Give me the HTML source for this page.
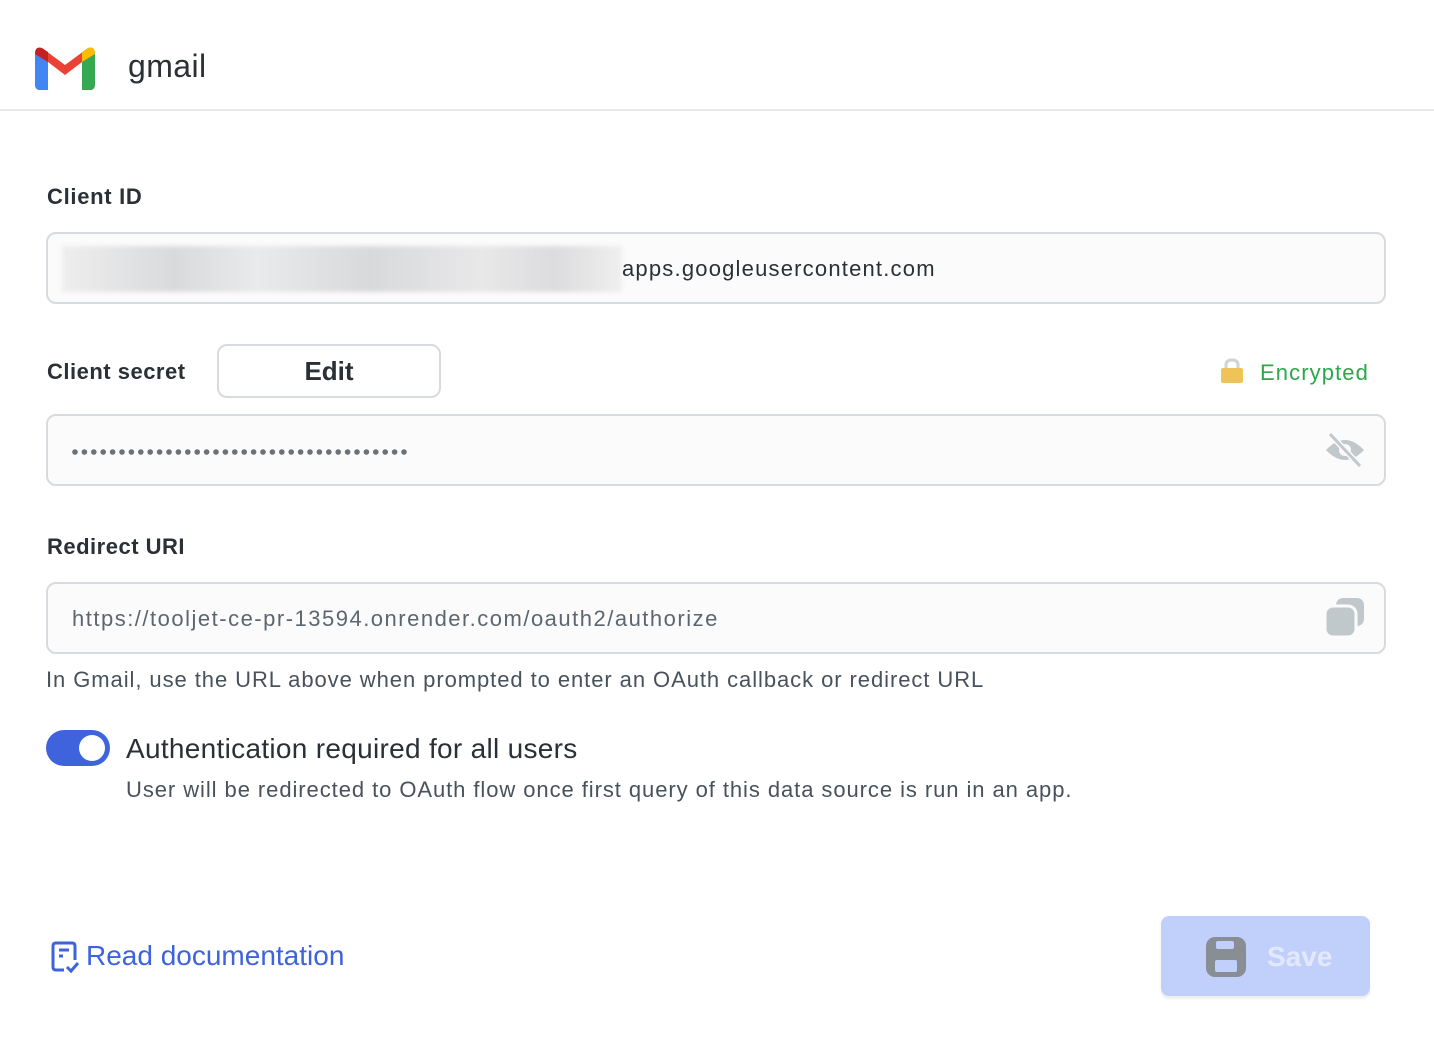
<!DOCTYPE html>
<html><head><meta charset="utf-8"><style>
*{box-sizing:border-box;margin:0;padding:0}
body{width:1434px;height:1044px;background:#fff;font-family:"Liberation Sans",sans-serif;color:#2b3036;position:relative;overflow:hidden}
.abs{position:absolute}
.hdr{left:0;top:0;width:1434px;height:111px;border-bottom:2px solid #e6e8eb}
.label{font-size:22px;font-weight:bold;color:#2b3036}
.inp{left:46px;width:1340px;height:72px;border:2px solid #d7dbdf;border-radius:10px;background:#fbfbfb}
.t{font-size:22px;white-space:nowrap}
</style></head><body>
<div class="abs hdr"></div>
<svg class="abs" style="left:35px;top:46px" width="60" height="44" viewBox="0 0 60 44">
<path d="M0 8 Q0 0 7 2 L30 19 L53 2 Q60 0 60 8 V38 Q60 44 55 44 H47 V16 L30 29 L13 16 V44 H5 Q0 44 0 38Z" fill="#ea4335"/>
<path d="M0 8 V38 Q0 44 5 44 H13 V16 L0 8Z" fill="#4285f4"/>
<path d="M60 8 V38 Q60 44 55 44 H47 V16 Z" fill="#34a853"/>
<path d="M47 16 L60 8 Q60 0 53 2 L47 6Z" fill="#fbbc04"/>
<path d="M13 16 L0 8 Q0 0 7 2 L13 6Z" fill="#c5221f"/>
</svg>
<div class="abs" style="left:128px;top:48px;font-size:32px;color:#2b3036;letter-spacing:0.4px">gmail</div>

<div class="abs label" style="left:47px;top:184px;letter-spacing:0.7px">Client ID</div>
<div class="abs inp" style="top:232px"></div>
<div class="abs" style="left:62px;top:246px;width:560px;height:46px;background:linear-gradient(90deg,#eee,#d9dadc 20%,#e9eaeb 35%,#d8d9db 55%,#e8e8e9 75%,#dcdcde 88%,#efefef);filter:blur(2px)"></div>
<div class="abs t" style="left:622px;top:256px;color:#2b3036;letter-spacing:1.2px">apps.googleusercontent.com</div>

<div class="abs label" style="left:47px;top:359px;letter-spacing:0.5px">Client secret</div>
<div class="abs" style="left:217px;top:344px;width:224px;height:54px;border:2px solid #d7dbdf;border-radius:10px;text-align:center;line-height:50px;font-size:26px;font-weight:bold;color:#2b3036">Edit</div>
<svg class="abs" style="left:1220px;top:358px" width="24" height="26" viewBox="0 0 24 26"><path d="M6 11 V7 Q6 2 12 2 Q18 2 18 7 V11" fill="none" stroke="#cfd3d6" stroke-width="3"/><rect x="1" y="10" width="22" height="15" rx="2" fill="#eec35a"/></svg>
<div class="abs t" style="left:1260px;top:360px;color:#2aa84a;letter-spacing:1.1px">Encrypted</div>
<div class="abs inp" style="top:414px"></div>
<svg class="abs" style="left:70px;top:446px" width="340" height="12">
<g fill="#6a7178">
<circle cx="5" cy="6" r="2.8"/><circle cx="14.4" cy="6" r="2.8"/><circle cx="23.8" cy="6" r="2.8"/><circle cx="33.2" cy="6" r="2.8"/><circle cx="42.6" cy="6" r="2.8"/><circle cx="52" cy="6" r="2.8"/><circle cx="61.4" cy="6" r="2.8"/><circle cx="70.8" cy="6" r="2.8"/><circle cx="80.2" cy="6" r="2.8"/><circle cx="89.6" cy="6" r="2.8"/><circle cx="99" cy="6" r="2.8"/><circle cx="108.4" cy="6" r="2.8"/><circle cx="117.8" cy="6" r="2.8"/><circle cx="127.2" cy="6" r="2.8"/><circle cx="136.6" cy="6" r="2.8"/><circle cx="146" cy="6" r="2.8"/><circle cx="155.4" cy="6" r="2.8"/><circle cx="164.8" cy="6" r="2.8"/><circle cx="174.2" cy="6" r="2.8"/><circle cx="183.6" cy="6" r="2.8"/><circle cx="193" cy="6" r="2.8"/><circle cx="202.4" cy="6" r="2.8"/><circle cx="211.8" cy="6" r="2.8"/><circle cx="221.2" cy="6" r="2.8"/><circle cx="230.6" cy="6" r="2.8"/><circle cx="240" cy="6" r="2.8"/><circle cx="249.4" cy="6" r="2.8"/><circle cx="258.8" cy="6" r="2.8"/><circle cx="268.2" cy="6" r="2.8"/><circle cx="277.6" cy="6" r="2.8"/><circle cx="287" cy="6" r="2.8"/><circle cx="296.4" cy="6" r="2.8"/><circle cx="305.8" cy="6" r="2.8"/><circle cx="315.2" cy="6" r="2.8"/><circle cx="324.6" cy="6" r="2.8"/><circle cx="334" cy="6" r="2.8"/>
</g></svg>
<svg class="abs" style="left:1324px;top:430px" width="42" height="40" viewBox="0 0 42 40"><path d="M2 20 Q21 0 40 20 Q21 40 2 20Z" fill="#c1c8cc"/><circle cx="21" cy="20" r="6" fill="#fbfbfb"/><line x1="6" y1="4" x2="36" y2="36" stroke="#fbfbfb" stroke-width="6"/><line x1="6" y1="4" x2="36" y2="36" stroke="#c1c8cc" stroke-width="3"/></svg>

<div class="abs label" style="left:47px;top:534px;letter-spacing:0.5px">Redirect URI</div>
<div class="abs inp" style="top:582px"></div>
<div class="abs t" style="left:72px;top:606px;color:#5d666e;letter-spacing:1.5px">https://tooljet-ce-pr-13594.onrender.com/oauth2/authorize</div>
<svg class="abs" style="left:1324px;top:596px" width="42" height="42" viewBox="0 0 42 42"><rect x="12" y="2" width="28" height="28" rx="7" fill="#c1c8cc"/><rect x="1" y="10" width="31" height="31" rx="8" fill="#c1c8cc" stroke="#fbfbfb" stroke-width="3"/></svg>
<div class="abs t" style="left:46px;top:667px;color:#48525c;letter-spacing:0.93px">In Gmail, use the URL above when prompted to enter an OAuth callback or redirect URL</div>

<div class="abs" style="left:46px;top:730px;width:64px;height:36px;border-radius:18px;background:#3e63dd"></div>
<div class="abs" style="left:79px;top:735px;width:26px;height:26px;border-radius:13px;background:#fff"></div>
<div class="abs" style="left:126px;top:733px;font-size:28px;color:#2b3036;white-space:nowrap;letter-spacing:0.3px">Authentication required for all users</div>
<div class="abs t" style="left:126px;top:777px;color:#48525c;letter-spacing:0.93px">User will be redirected to OAuth flow once first query of this data source is run in an app.</div>

<svg class="abs" style="left:50px;top:940px" width="30" height="34" viewBox="0 0 30 34"><path d="M14 30 H6 Q3 30 3 27 V6 Q3 3 6 3 H22 Q25 3 25 6 V20" fill="none" stroke="#3e63dd" stroke-width="3"/><line x1="9" y1="10" x2="19" y2="10" stroke="#3e63dd" stroke-width="3"/><line x1="9" y1="16" x2="13" y2="16" stroke="#3e63dd" stroke-width="3"/><path d="M17 27 L21 31 L28 23" fill="none" stroke="#3e63dd" stroke-width="3"/></svg>
<div class="abs" style="left:86px;top:940px;font-size:28px;color:#3e63dd">Read documentation</div>

<div class="abs" style="left:1161px;top:916px;width:209px;height:80px;border-radius:8px;background:#c1d0fa;box-shadow:0 3px 2px #eee"></div>
<svg class="abs" style="left:1205px;top:936px" width="42" height="42" viewBox="0 0 42 42"><rect x="1" y="1" width="40" height="40" rx="9" fill="#888e94"/><rect x="11" y="5" width="18" height="8" rx="2" fill="#c1d0fa"/><rect x="10" y="24" width="22" height="12" rx="2" fill="#c1d0fa"/></svg>
<div class="abs" style="left:1267px;top:941px;font-size:28px;font-weight:bold;color:#e3e9fd">Save</div>
</body></html>
